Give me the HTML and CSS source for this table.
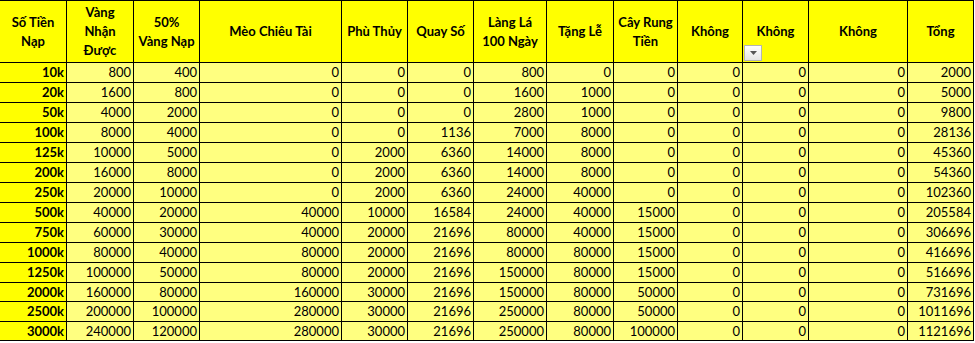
FILE: index.html
```html
<!DOCTYPE html>
<html lang="vi">
<head>
<meta charset="utf-8">
<title>Bảng nạp</title>
<link rel="stylesheet" href="styles.css">
</head>
<body>
<div class="sheet">
  <div class="h">Số Tiền<br>Nạp</div>
  <div class="h">Vàng<br>Nhận<br>Được</div>
  <div class="h">50%<br>Vàng Nạp</div>
  <div class="h">Mèo Chiêu Tài</div>
  <div class="h">Phù Thủy</div>
  <div class="h">Quay Số</div>
  <div class="h">Làng Lá<br>100 Ngày</div>
  <div class="h">Tặng Lễ</div>
  <div class="h">Cây Rung<br>Tiền</div>
  <div class="h">Không</div>
  <div class="h filter">Không<span class="dd"><svg width="7" height="4" viewBox="0 0 7 4"><path d="M0 0h7L3.5 4z" fill="#555"/></svg></span></div>
  <div class="h">Không</div>
  <div class="h">Tổng</div>

  <div class="k">10k</div><div class="c">800</div><div class="c">400</div><div class="c">0</div><div class="c">0</div><div class="c">0</div><div class="c">800</div><div class="c">0</div><div class="c">0</div><div class="c">0</div><div class="c">0</div><div class="c">0</div><div class="c">2000</div>
  <div class="k">20k</div><div class="c">1600</div><div class="c">800</div><div class="c">0</div><div class="c">0</div><div class="c">0</div><div class="c">1600</div><div class="c">1000</div><div class="c">0</div><div class="c">0</div><div class="c">0</div><div class="c">0</div><div class="c">5000</div>
  <div class="k">50k</div><div class="c">4000</div><div class="c">2000</div><div class="c">0</div><div class="c">0</div><div class="c">0</div><div class="c">2800</div><div class="c">1000</div><div class="c">0</div><div class="c">0</div><div class="c">0</div><div class="c">0</div><div class="c">9800</div>
  <div class="k">100k</div><div class="c">8000</div><div class="c">4000</div><div class="c">0</div><div class="c">0</div><div class="c">1136</div><div class="c">7000</div><div class="c">8000</div><div class="c">0</div><div class="c">0</div><div class="c">0</div><div class="c">0</div><div class="c">28136</div>
  <div class="k">125k</div><div class="c">10000</div><div class="c">5000</div><div class="c">0</div><div class="c">2000</div><div class="c">6360</div><div class="c">14000</div><div class="c">8000</div><div class="c">0</div><div class="c">0</div><div class="c">0</div><div class="c">0</div><div class="c">45360</div>
  <div class="k">200k</div><div class="c">16000</div><div class="c">8000</div><div class="c">0</div><div class="c">2000</div><div class="c">6360</div><div class="c">14000</div><div class="c">8000</div><div class="c">0</div><div class="c">0</div><div class="c">0</div><div class="c">0</div><div class="c">54360</div>
  <div class="k">250k</div><div class="c">20000</div><div class="c">10000</div><div class="c">0</div><div class="c">2000</div><div class="c">6360</div><div class="c">24000</div><div class="c">40000</div><div class="c">0</div><div class="c">0</div><div class="c">0</div><div class="c">0</div><div class="c">102360</div>
  <div class="k">500k</div><div class="c">40000</div><div class="c">20000</div><div class="c">40000</div><div class="c">10000</div><div class="c">16584</div><div class="c">24000</div><div class="c">40000</div><div class="c">15000</div><div class="c">0</div><div class="c">0</div><div class="c">0</div><div class="c">205584</div>
  <div class="k">750k</div><div class="c">60000</div><div class="c">30000</div><div class="c">40000</div><div class="c">20000</div><div class="c">21696</div><div class="c">80000</div><div class="c">40000</div><div class="c">15000</div><div class="c">0</div><div class="c">0</div><div class="c">0</div><div class="c">306696</div>
  <div class="k">1000k</div><div class="c">80000</div><div class="c">40000</div><div class="c">80000</div><div class="c">20000</div><div class="c">21696</div><div class="c">80000</div><div class="c">80000</div><div class="c">15000</div><div class="c">0</div><div class="c">0</div><div class="c">0</div><div class="c">416696</div>
  <div class="k">1250k</div><div class="c">100000</div><div class="c">50000</div><div class="c">80000</div><div class="c">20000</div><div class="c">21696</div><div class="c">150000</div><div class="c">80000</div><div class="c">15000</div><div class="c">0</div><div class="c">0</div><div class="c">0</div><div class="c">516696</div>
  <div class="k">2000k</div><div class="c">160000</div><div class="c">80000</div><div class="c">160000</div><div class="c">30000</div><div class="c">21696</div><div class="c">150000</div><div class="c">80000</div><div class="c">50000</div><div class="c">0</div><div class="c">0</div><div class="c">0</div><div class="c">731696</div>
  <div class="k">2500k</div><div class="c">200000</div><div class="c">100000</div><div class="c">280000</div><div class="c">30000</div><div class="c">21696</div><div class="c">250000</div><div class="c">80000</div><div class="c">50000</div><div class="c">0</div><div class="c">0</div><div class="c">0</div><div class="c">1011696</div>
  <div class="k">3000k</div><div class="c">240000</div><div class="c">120000</div><div class="c">280000</div><div class="c">30000</div><div class="c">21696</div><div class="c">250000</div><div class="c">80000</div><div class="c">100000</div><div class="c">0</div><div class="c">0</div><div class="c">0</div><div class="c">1121696</div>
</div>
</body>
</html>
```

FILE: styles.css
```css
html, body {
  margin: 0;
  padding: 0;
  background: #ffffff;
}

.sheet {
  display: grid;
  grid-template-columns: 66px 66px 65px 141px 65px 65px 72px 66px 63px 64px 65px 98px 65px;
  grid-template-rows: 61px repeat(11, 19px) 18px 19px 18px;
  gap: 1px;
  width: 973px;
  background: #000000;
  border-top: 1px solid #000000;
  border-right: 1px solid #000000;
  border-bottom: 1px solid #000000;
  font-family: Lato, "Open Sans", sans-serif;
  font-size: 13px;
  color: #000000;
}

.h {
  background: #ffff00;
  font-weight: 700;
  line-height: 19px;
  display: flex;
  align-items: center;
  justify-content: center;
  text-align: center;
  white-space: nowrap;
}

.filter {
  position: relative;
}

.dd {
  position: absolute;
  left: 1px;
  bottom: 1px;
  width: 16px;
  height: 14px;
  border: 1px solid #b4b4b4;
  background: linear-gradient(#ffffff, #e4e4e4);
  display: flex;
  align-items: center;
  justify-content: center;
}

.k,
.c {
  line-height: 19px;
  text-align: right;
  padding-right: 2px;
  white-space: nowrap;
  overflow: hidden;
}

.k {
  background: #ffff00;
  font-weight: 700;
}

.c {
  background: #ffff80;
}
```
